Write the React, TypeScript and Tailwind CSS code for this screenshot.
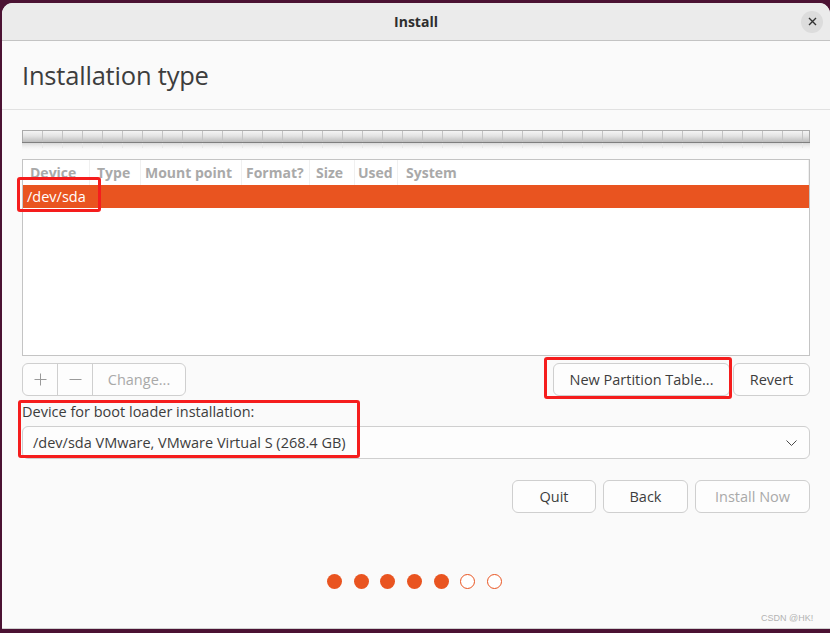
import React from "react";

const columns = [
  { label: "Device", w: "w-[67px]", pl: "pl-[7px]" },
  { label: "Type", w: "w-[51px]", pl: "pl-[7px]" },
  { label: "Mount point", w: "w-[101px]", pl: "pl-[4px]" },
  { label: "Format?", w: "w-[68px]", pl: "pl-[4px]" },
  { label: "Size", w: "w-[45px]", pl: "pl-[6px]" },
  { label: "Used", w: "w-[43px]", pl: "pl-[3px]" },
  { label: "System", w: "flex-1", pl: "pl-[8px]" },
];

function PartitionBar() {
  const ticks = Array.from({ length: 39 }, (_, i) => (i + 1) * 20 + 0.5);
  return (
    <svg width={788} height={22} className="block">
      <defs>
        <linearGradient id="bar" x1="0" y1="0" x2="0" y2="1">
          <stop offset="0" stopColor="#f6f6f6" />
          <stop offset="0.45" stopColor="#e4e4e4" />
          <stop offset="1" stopColor="#b9b9b9" />
        </linearGradient>
        <linearGradient id="refl" x1="0" y1="0" x2="0" y2="1">
          <stop offset="0" stopColor="#cfcfcf" stopOpacity="0.8" />
          <stop offset="1" stopColor="#fafafa" stopOpacity="0" />
        </linearGradient>
      </defs>
      <rect x={0.5} y={0.5} width={787} height={12} fill="url(#bar)" stroke="#aaaaaa" />
      {ticks.map((x) => (
        <line key={x} x1={x} x2={x} y1={1} y2={12} stroke="#c4c4c4" />
      ))}
      <line x1={0} x2={788} y1={12.5} y2={12.5} stroke="#7f7f7f" />
      <rect x={0} y={13} width={788} height={8} fill="url(#refl)" />
      {ticks.map((x) => (
        <line key={"r" + x} x1={x} x2={x} y1={13} y2={18} stroke="#e6e6e6" />
      ))}
    </svg>
  );
}

function Btn({ children, disabled, className = "" }: { children: React.ReactNode; disabled?: boolean; className?: string }) {
  return (
    <div
      className={`h-[33px] flex items-center justify-center rounded-[6px] border border-[#cfcfcf] bg-[#fdfdfd] text-[14.5px] ${
        disabled ? "text-[#a9a9a9]" : "text-[#3d3d3d]"
      } ${className}`}
    >
      {children}
    </div>
  );
}

export default function App() {
  return (
    <div className="relative w-[830px] h-[633px] overflow-hidden bg-[#4b1233] font-['Open_Sans','Noto_Sans',sans-serif]">
      <div className="ml-[2px] mt-[3px] w-[828px] h-[626px] rounded-t-[11px] bg-[#fafafa] border-b border-[#cfcfcf] flex flex-col overflow-hidden">
        {/* Title bar */}
        <div className="h-[38px] shrink-0 bg-[#ebebeb] border-b border-[#c3c3c3] grid grid-cols-[1fr_auto_1fr] items-center">
          <div />
          <div className="text-[14px] font-bold text-[#2e2e2e]">Install</div>
          <div className="flex justify-end pr-[7px]">
            <div className="w-[22px] h-[22px] rounded-full bg-[#dcdcdc] flex items-center justify-center">
              <svg width="9" height="9" viewBox="0 0 9 9">
                <path d="M1 1L8 8M8 1L1 8" stroke="#333" strokeWidth="1.4" />
              </svg>
            </div>
          </div>
        </div>

        {/* Heading */}
        <div className="h-[69px] shrink-0 border-b border-[#e1e1e1] flex items-center pl-[20px]">
          <h1 className="text-[25.5px] font-normal text-[#3d3d3d] tracking-[-0.2px]">Installation type</h1>
        </div>

        {/* Content */}
        <div className="flex flex-col px-[20px] pt-[20px] w-[828px]">
          <PartitionBar />

          <div className="mt-[7px] h-[197px] border border-[#c4c4c4] bg-white flex flex-col">
            <div className="h-[25px] flex items-center text-[14px] font-bold text-[#a9a9a9]">
              {columns.map((c) => (
                <div key={c.label} className={`${c.w} ${c.pl} h-full flex items-center border-r border-[#f0f0f0] whitespace-nowrap`}>
                  {c.label}
                </div>
              ))}
            </div>
            <div className="h-[23px] bg-[#e95420] flex items-center pl-[4px] text-[14.5px] text-white">/dev/sda</div>
          </div>

          <div className="mt-[7px] flex items-center">
            <div className="h-[33px] w-[164px] flex rounded-[6px] border border-[#cfcfcf] bg-[#fdfdfd]">
              <div className="w-[35px] flex items-center justify-center border-r border-[#cfcfcf]">
                <svg width="13" height="13" viewBox="0 0 13 13">
                  <path d="M6.5 0.5V12.5M0.5 6.5H12.5" stroke="#9a9a9a" strokeWidth="1" />
                </svg>
              </div>
              <div className="w-[35px] flex items-center justify-center border-r border-[#cfcfcf]">
                <svg width="13" height="13" viewBox="0 0 13 13">
                  <path d="M0.5 6.5H12.5" stroke="#9a9a9a" strokeWidth="1" />
                </svg>
              </div>
              <div className="flex-1 flex items-center justify-center text-[14.5px] text-[#a9a9a9]">Change...</div>
            </div>
            <div className="flex-1" />
            <Btn className="w-[177px]">New Partition Table...</Btn>
            <Btn className="w-[77px] ml-[3px]">Revert</Btn>
          </div>

          <div className="mt-[6px] h-[20px] flex items-center text-[14.5px] text-[#3d3d3d]">
            Device for boot loader installation:
          </div>

          <div className="mt-[4px] h-[33px] rounded-[6px] border border-[#cfcfcf] bg-[#fdfdfd] flex items-center pl-[10px] pr-[12px] text-[14.5px] text-[#3d3d3d]">
            <span className="flex-1">/dev/sda VMware, VMware Virtual S (268.4 GB)</span>
            <svg width="11" height="6" viewBox="0 0 11 6">
              <path d="M0.5 0.5L5.5 5.5L10.5 0.5" fill="none" stroke="#4a4a4a" strokeWidth="1" />
            </svg>
          </div>

          <div className="mt-[21px] flex justify-end gap-[7px]">
            <Btn className="w-[84px]">Quit</Btn>
            <Btn className="w-[85px]">Back</Btn>
            <Btn disabled className="w-[115px]">Install Now</Btn>
          </div>

          <div className="mt-[61px] flex pl-[305px] gap-[11.7px]">
            {[0, 1, 2, 3, 4].map((i) => (
              <div key={i} className="w-[15px] h-[15px] rounded-full bg-[#e95420]" />
            ))}
            {[5, 6].map((i) => (
              <div key={i} className="w-[15px] h-[15px] rounded-full bg-white border-[1.5px] border-[#e95420]" />
            ))}
          </div>
        </div>
      </div>

      {/* watermark */}
      <div className="absolute left-[761px] top-[612px] text-[9px] text-[#b3b3b3] font-['Liberation_Sans',sans-serif]">CSDN @HK!</div>

      {/* red annotation boxes */}
      <div className="absolute left-[17px] top-[177px] w-[84px] h-[35px] border-[3px] border-[#f51d1d] rounded-[3px]" />
      <div className="absolute left-[544px] top-[357px] w-[188px] h-[42px] border-[3px] border-[#f51d1d] rounded-[3px]" />
      <div className="absolute left-[18px] top-[400px] w-[342px] h-[58px] border-[3px] border-[#f51d1d] rounded-[3px]" />
    </div>
  );
}
